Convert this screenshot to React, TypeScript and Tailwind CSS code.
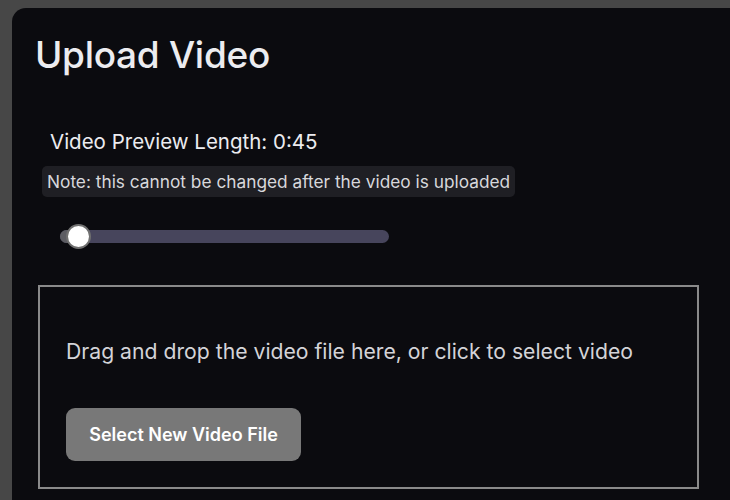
export default function App() {
  return (
    <div className="h-[500px] w-[730px] overflow-hidden bg-[#474747] pl-[12px] pt-[8px] font-['Inter',sans-serif]">
      <div className="h-[520px] rounded-tl-[14px] bg-[#0b0b0f] pl-[23px] pt-[25px]">
        {/* Header */}
        <h1 className="text-[37px] font-medium leading-[44px] tracking-[-0.3px] text-[#ececf0]">
          Upload Video
        </h1>

        {/* Preview length */}
        <div className="mt-[52px] pl-[15px] text-[20.5px] leading-[26px] text-[#ececf0]">
          Video Preview Length: 0:45
        </div>
        <div className="ml-[7px] mt-[11px] inline-block rounded-[5px] bg-[#1f1f24] px-[5px] py-[5px] text-[17.3px] leading-[21px] text-[#d8d8dc]">
          Note: this cannot be changed after the video is uploaded
        </div>

        {/* Slider */}
        <div className="relative ml-[25px] mt-[33px] h-[13px] w-[329px] rounded-full bg-[#47455c]">
          <div className="absolute left-0 top-0 h-[13px] w-[20px] rounded-l-full bg-[#5c5c62]" />
          <div className="absolute left-[6px] top-[-6px] h-[25px] w-[25px] rounded-full border-[2px] border-[#707070] bg-white" />
        </div>

        {/* Dropzone */}
        <div className="ml-[3px] mt-[42px] h-[204px] w-[661px] border-[2px] border-[#8a8a8a] pl-[26px] pt-[50px]">
          <p className="text-[21.2px] leading-[28px] text-[#d4d4d8]">
            Drag and drop the video file here, or click to select video
          </p>
          <button className="mt-[43px] h-[53px] w-[235px] rounded-[9px] bg-[#787878] text-[18px] font-semibold text-white">
            Select New Video File
          </button>
        </div>
      </div>
    </div>
  );
}
